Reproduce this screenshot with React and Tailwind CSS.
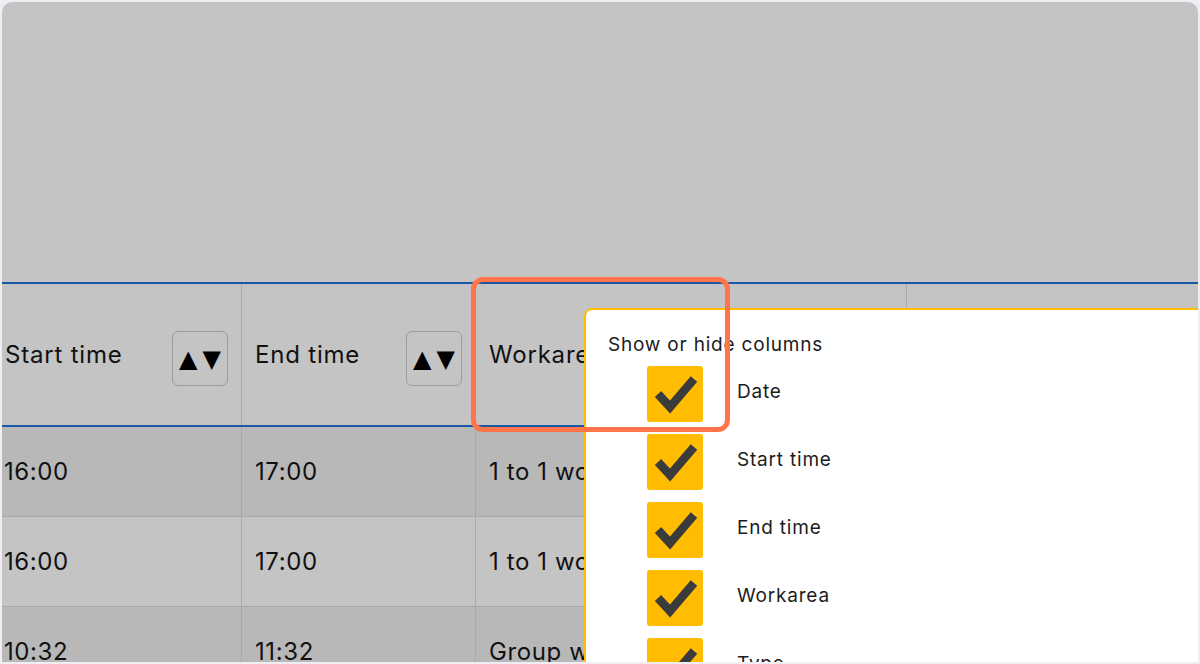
import React from "react";

const font = { fontFamily: "Inter, 'Noto Sans', sans-serif" };

const columns = [
  { label: "Start time", w: "w-[240px]", pad: "pl-[3px]", sort: true },
  { label: "End time", w: "w-[234px]", pad: "pl-[13px]", sort: true },
  { label: "Workarea", w: "w-[431px]", pad: "pl-[13px]", sort: false },
  { label: "", w: "flex-1", pad: "pl-[13px]", sort: false },
];

const rows = [
  { cells: ["16:00", "17:00", "1 to 1 workarea", ""], dark: true },
  { cells: ["16:00", "17:00", "1 to 1 workarea", ""], dark: false },
  { cells: ["10:32", "11:32", "Group workarea", ""], dark: true },
];

const toggles = ["Date", "Start time", "End time", "Workarea", "Type"];

function SortButton() {
  return (
    <button className="mt-[8px] w-[56px] h-[55px] rounded-[6px] border-[1.5px] border-[#9c9c9c] flex items-center justify-center gap-[5px] text-black">
      <span className="text-[24px] leading-none" style={{ fontFamily: "'DejaVu Sans', sans-serif" }}>▲</span>
      <span className="text-[24px] leading-none" style={{ fontFamily: "'DejaVu Sans', sans-serif" }}>▼</span>
    </button>
  );
}

function Check() {
  return (
    <div className="w-[56px] h-[56px] shrink-0 rounded-[3px] bg-[#ffbc00]">
      <svg width="56" height="56" viewBox="0 0 56 56">
        <polyline points="11,28 23,41 47,13" fill="none" stroke="#3b3b3b" strokeWidth="8.5" strokeLinejoin="miter" />
      </svg>
    </div>
  );
}

export default function App() {
  return (
    <div className="w-[1200px] h-[664px] bg-[#eeeef4] p-[2px] overflow-hidden" style={font}>
      <div className="relative w-full h-full bg-[#c4c4c4] rounded-t-[10px] overflow-hidden flex flex-col">
        <div className="h-[280px] shrink-0" />

        {/* table header */}
        <div className="flex h-[145px] shrink-0 border-y-2 border-[#1a57a6] text-[#111]">
          {columns.map((c, i) => (
            <div
              key={i}
              className={`${c.w} shrink-0 flex items-center justify-between pr-[13px] ${c.pad} ${i < 3 ? "border-r border-[#aaaaaa]" : ""}`}
            >
              <span className="text-[24px] tracking-[0.8px] whitespace-nowrap">{c.label}</span>
              {c.sort && <SortButton />}
            </div>
          ))}
        </div>

        {/* table body */}
        {rows.map((r, ri) => (
          <div key={ri} className={`flex h-[90px] shrink-0 border-b border-[#a9a9a9] ${r.dark ? "bg-[#b8b8b8]" : "bg-[#c4c4c4]"}`}>
            {r.cells.map((cell, ci) => (
              <div
                key={ci}
                className={`${columns[ci].w} shrink-0 flex items-center ${ci === 0 ? "pl-[2px]" : "pl-[13px]"} ${ci < 3 ? "border-r border-[#aaaaaa]" : ""}`}
              >
                <span className="text-[24px] tracking-[0.6px] text-[#111] whitespace-nowrap">{cell}</span>
              </div>
            ))}
          </div>
        ))}

        {/* column toggle popup */}
        <div className="absolute left-[582px] top-[306px] w-[640px] h-[400px] bg-white border-2 border-[#ffbf00] rounded-tl-[8px] pl-[22px] pt-[21px]">
          <p className="text-[19px] tracking-[0.8px] text-[#1c1c1c] leading-[28px]">Show or hide columns</p>
          <div className="flex flex-col gap-[12px] pl-[39px] pt-[7px]">
            {toggles.map((t) => (
              <label key={t} className="flex items-center gap-[34px]">
                <Check />
                <span className="text-[19px] tracking-[0.8px] text-[#1c1c1c] -mt-[3px]">{t}</span>
              </label>
            ))}
          </div>
        </div>

        {/* highlight */}
        <div className="absolute left-[469px] top-[275px] w-[259px] h-[155px] border-[5px] border-[#ff7549] rounded-[12px] pointer-events-none" />
      </div>
    </div>
  );
}
